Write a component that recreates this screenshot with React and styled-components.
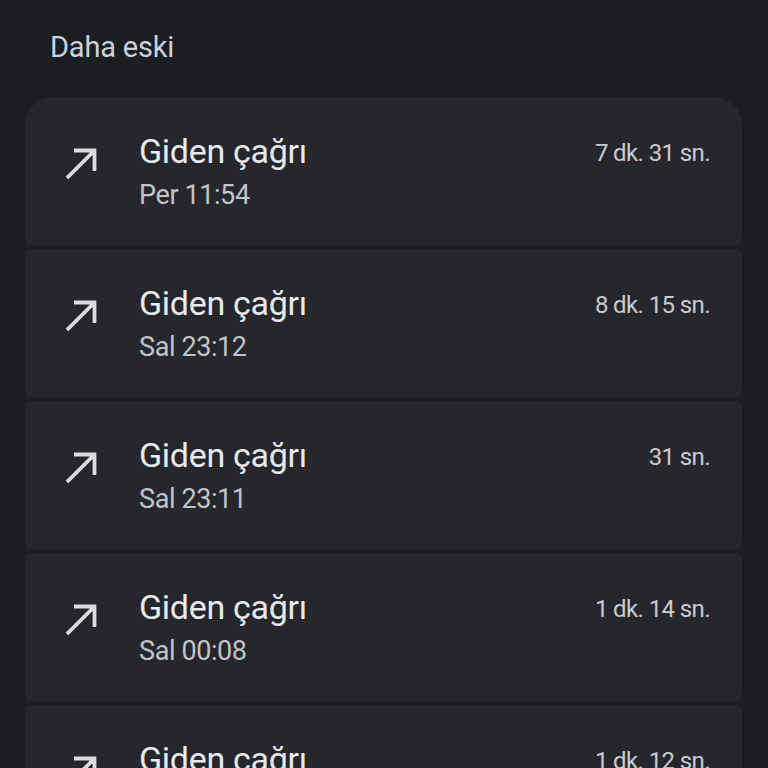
import React from "react";
import styled, { createGlobalStyle } from "styled-components";

const Global = createGlobalStyle`
  html, body {
    margin: 0;
    padding: 0;
    background: #1b1d21;
  }
  body {
    font-family: Roboto, "Noto Sans", sans-serif;
    -webkit-font-smoothing: antialiased;
  }
`;

const Page = styled.div`
  width: 768px;
  height: 768px;
  overflow: hidden;
  background: #1b1d21;
  padding: 0 26px 0 25px;
  box-sizing: border-box;
`;

const Header = styled.h2`
  margin: 0;
  padding: 30px 0 0 25px;
  height: 97px;
  box-sizing: border-box;
  font-size: 29px;
  font-weight: 400;
  letter-spacing: -0.2px;
  color: #c9d2de;
`;

const List = styled.div`
  display: flex;
  flex-direction: column;
  gap: 4px;
`;

const Card = styled.div`
  height: 148px;
  flex-shrink: 0;
  background: #25272c;
  border-radius: ${(p) => (p.$first ? "28px 28px 6px 6px" : "6px")};
  display: grid;
  grid-template-columns: 114px 1fr auto;
  padding-right: 32px;
  box-sizing: border-box;
`;

const IconCell = styled.div`
  padding: 50px 0 0 40px;
`;

const Texts = styled.div`
  padding-top: 33px;
  display: flex;
  flex-direction: column;
`;

const Title = styled.div`
  font-size: 34px;
  line-height: 42px;
  color: #e9eaed;
  letter-spacing: -0.3px;
`;

const Sub = styled.div`
  margin-top: 6px;
  font-size: 27px;
  line-height: 34px;
  color: #c2c4c8;
  letter-spacing: -0.4px;
`;

const Duration = styled.div`
  padding-top: 41px;
  font-size: 24px;
  line-height: 30px;
  color: #c9cbce;
  letter-spacing: -0.6px;
`;

const Arrow = () => (
  <svg width="34" height="34" viewBox="0 0 34 34" fill="none">
    <path
      d="M2 31 L29.5 3.5 M9 3.5 H29.5 V24"
      stroke="#dcdde0"
      strokeWidth="3.8"
      strokeLinecap="butt"
    />
  </svg>
);

const calls = [
  { time: "Per 11:54", dur: "7 dk. 31 sn." },
  { time: "Sal 23:12", dur: "8 dk. 15 sn." },
  { time: "Sal 23:11", dur: "31 sn." },
  { time: "Sal 00:08", dur: "1 dk. 14 sn." },
  { time: "Sal 00:05", dur: "1 dk. 12 sn." },
];

export default function App() {
  return (
    <Page>
      <Global />
      <Header>Daha eski</Header>
      <List>
        {calls.map((c, i) => (
          <Card key={i} $first={i === 0}>
            <IconCell>
              <Arrow />
            </IconCell>
            <Texts>
              <Title>Giden çağrı</Title>
              <Sub>{c.time}</Sub>
            </Texts>
            <Duration>{c.dur}</Duration>
          </Card>
        ))}
      </List>
    </Page>
  );
}
